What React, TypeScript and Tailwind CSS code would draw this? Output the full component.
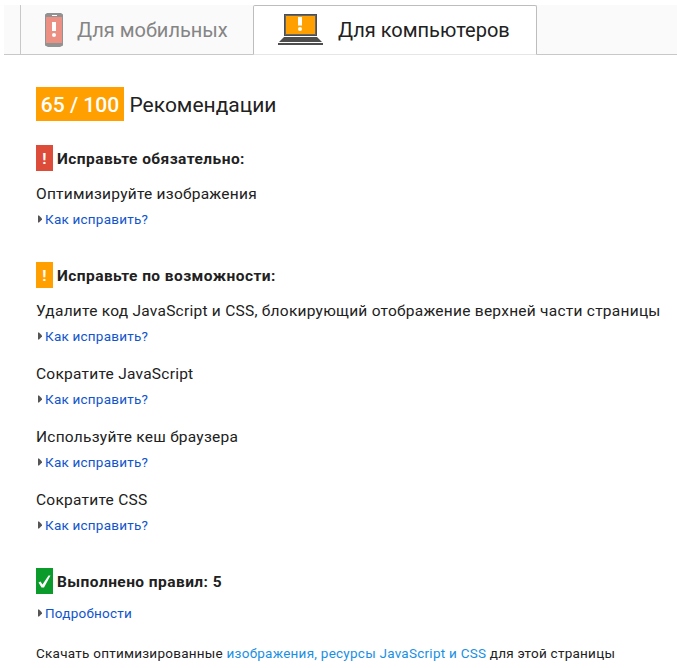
import type { ReactNode } from 'react';

const groups = [
  {
    id: 'must',
    title: 'Исправьте обязательно:',
    color: 'bg-[#dd4b39]',
    rules: ['Оптимизируйте изображения'],
  },
  {
    id: 'should',
    title: 'Исправьте по возможности:',
    color: 'bg-[#ffa000]',
    rules: [
      'Удалите код JavaScript и CSS, блокирующий отображение верхней части страницы',
      'Сократите JavaScript',
      'Используйте кеш браузера',
      'Сократите CSS',
    ],
  },
];

function PhoneIcon() {
  return (
    <svg width="18" height="34" viewBox="0 0 18 34" className="shrink-0">
      <path d="M2 0h14l2 1.5v31L15 34H3l-3-1.500v-31z" fill="#929292" />
      <rect x="1" y="4" width="16" height="26" fill="#eb9083" />
      <rect x="7" y="2" width="5" height="1" fill="#fff" />
      <rect x="7" y="9" width="4" height="9" fill="#fff" />
      <circle cx="9" cy="22" r="2" fill="#fff" />
    </svg>
  );
}

function LaptopIcon() {
  return (
    <svg width="45" height="32" viewBox="0 0 45 32" className="shrink-0">
      <rect x="6" y="0" width="33" height="22" fill="#4d4d4d" />
      <rect x="7" y="1" width="31" height="20" fill="#666" />
      <rect x="8" y="2" width="29" height="18" fill="#ffa000" />
      <rect x="20" y="3" width="4" height="8.500" fill="#fff" />
      <circle cx="22" cy="15" r="2" fill="#fff" />
      <path d="M6 23h33l5 5H1z" fill="#4d4d4d" />
      <rect x="0" y="29" width="45" height="2" fill="#4d4d4d" />
    </svg>
  );
}

function Toggle({ children }: { children: ReactNode }) {
  return (
    <a href="#" className="flex h-5 items-center text-[13.5px] leading-5 tracking-[0.22px] text-[#1155cc]">
      <svg width="9" height="8" viewBox="0 0 9 8" className="shrink-0">
        <path d="M2 0.500h1l3 3v1l-3 3H2z" fill="#555" />
      </svg>
      {children}
    </a>
  );
}

function GroupTitle({ badge, color, children }: { badge: ReactNode; color: string; children: ReactNode }) {
  return (
    <h3 className="flex h-[26px] items-center gap-1 text-[15.5px] leading-6 font-bold tracking-[0.44px]">
      <span className={`flex h-[26px] w-[17px] items-center justify-center pt-px text-white ${color}`}>{badge}</span>
      <span className="pt-px">{children}</span>
    </h3>
  );
}

export default function App() {
  return (
    <div className="h-[668px] overflow-hidden bg-white font-[Roboto,sans-serif] text-[#212121]">
      {/* Tabs */}
      <div className="mt-[5px] ml-1 flex h-[51px] text-xl">
        <div className="h-[50px] w-4 border-b border-[#c8c8c8] bg-[#fafafa]" />
        <div className="flex h-[50px] w-[233px] items-center border-b border-l border-[#c8c8c8] bg-[#fafafa] pl-6 text-[#858585]">
          <PhoneIcon />
          <span className="ml-[14px]">Для мобильных</span>
        </div>
        <div className="flex h-[50px] w-[284px] items-center rounded-t-[2px] border border-[#bdbdbd] border-b-[#e6e6e6] bg-white pl-6">
          <LaptopIcon />
          <span className="ml-[15px]">Для компьютеров</span>
        </div>
        <div className="h-[50px] flex-1 border-b border-[#c8c8c8] bg-[#fafafa]" />
      </div>

      <div className="ml-9 pt-[31px]">
        {/* Score */}
        <h2 className="flex h-[34px] items-center text-[21px] leading-[34px]">
          <span className="mr-[5.5px] flex h-[34px] w-[88px] items-center justify-center bg-[#ffa000] pt-px font-medium text-white">
            65 / 100
          </span>
          <span className="pt-px">Рекомендации</span>
        </h2>

        {groups.map((group) => (
          <section key={group.id} className="mt-6 mb-[33px]">
            <GroupTitle badge="!" color={group.color}>
              {group.title}
            </GroupTitle>
            <ul className="mt-3">
              {group.rules.map((rule) => (
                <li key={rule} className="mb-[17px]">
                  <p className="h-[26px] text-[15.5px] leading-[22px] tracking-[0.25px] whitespace-nowrap">{rule}</p>
                  <Toggle>Как исправить?</Toggle>
                </li>
              ))}
            </ul>
          </section>
        ))}

        {/* Passed rules */}
        <GroupTitle
          color="bg-[#0a9b2b]"
          badge={
            <svg width="13" height="14" viewBox="0 0 13 14">
              <path d="M.5 7.500l2-1 2 3L10.500.5h2L6 12.500H3.500z" fill="#fff" />
            </svg>
          }
        >
          Выполнено правил: 5
        </GroupTitle>
        <div className="mt-[9px]">
          <Toggle>Подробности</Toggle>
        </div>

        <p className="mt-5 text-[13.5px] leading-5 tracking-[0.25px] whitespace-nowrap">
          Скачать оптимизированные{' '}
          <a href="#" className="text-[#1a8fe3]">
            изображения, ресурсы JavaScript и CSS
          </a>{' '}
          для этой страницы
        </p>
      </div>
    </div>
  );
}
